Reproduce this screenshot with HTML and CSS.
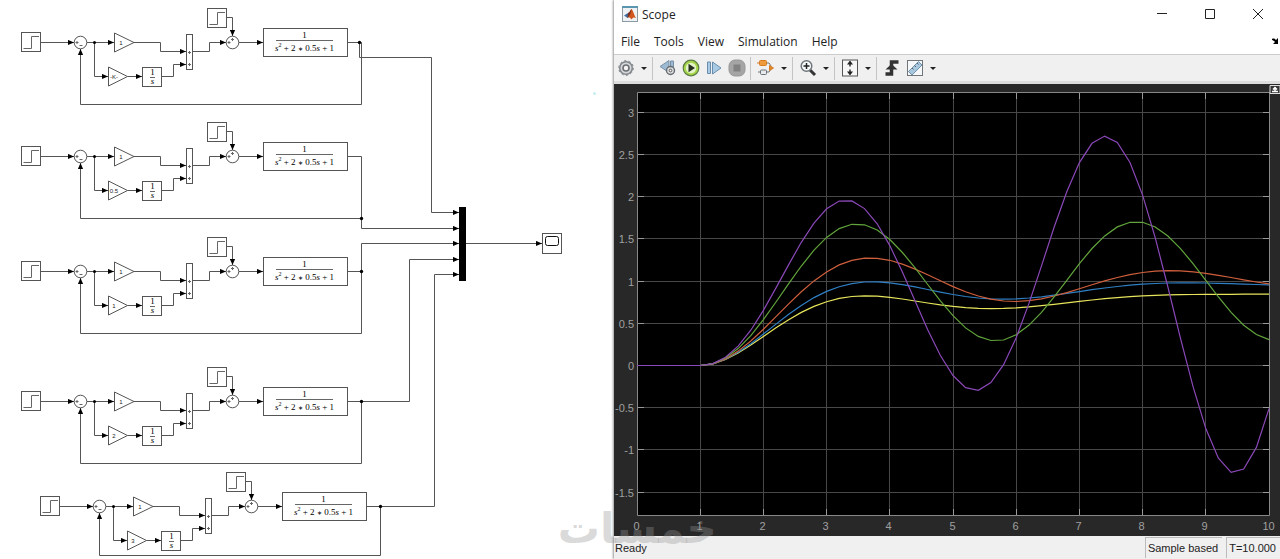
FILE: index.html
```html
<!DOCTYPE html>
<html lang="en">
<head>
<meta charset="utf-8">
<meta name="viewport" content="width=device-width, initial-scale=1">
<title>Scope</title>
<link rel="stylesheet" href="styles.css">
</head>
<body>
<main class="desktop">
  <section class="model" aria-label="Block diagram">
    <svg class="diagram" viewBox="0 0 614 559" preserveAspectRatio="xMinYMin meet">
      <defs>
        <marker id="arrow" markerUnits="userSpaceOnUse" markerWidth="7" markerHeight="6" refX="6" refY="3" orient="auto">
          <path d="M0 0.4 6 3 0 5.6z" fill="#000"/>
        </marker>
        <g id="step">
          <rect class="block" x="0.5" y="0.5" width="19" height="19"/>
          <path class="trace" d="M2.5 16.5h8v-12h7.5"/>
        </g>
        <g id="loop">
          <use href="#step" x="21" y="32"/>
          <use href="#step" x="207" y="8"/>
          <circle class="block" cx="80.5" cy="42.5" r="6.3"/>
          <circle class="block" cx="232.5" cy="42.5" r="6.3"/>
          <path class="sign" d="M75.5 42.5h3M77 41v3M79.5 45.5h3M227.5 42.5h3M229 41v3M231 39.5h3M232.5 38v3"/>
          <path class="block" d="M114.5 33v19l19.5-9.5zM108.5 67v19l19-9.5z"/>
          <rect class="block" x="142.5" y="67.5" width="19" height="19"/>
          <path class="sign" d="M150 77.5h5"/>
          <text class="math small" x="152.5" y="75">1</text>
          <text class="math small slanted" x="152.5" y="84">s</text>
          <rect class="block" x="186.5" y="34.5" width="6" height="35"/>
          <path class="sign" d="M188 52.5h3M189.5 51v3M188 64.5h3M189.5 63v3"/>
          <text class="gain" x="121" y="45">1</text>
          <path class="wire arrow" d="M40.5 42.5H74"/>
          <path class="wire arrow" d="M87 42.5H114"/>
          <path class="wire arrow" d="M94.5 42.5V76.5H108"/>
          <path class="wire arrow" d="M134 42.5H160.5V51.5H186"/>
          <path class="wire arrow" d="M127.5 76.5H142"/>
          <path class="wire arrow" d="M161.5 76.5H173.5V64.5H186"/>
          <path class="wire arrow" d="M192.5 51.5H209.5V42.5H226"/>
          <path class="wire arrow" d="M226.5 17.5H232.5V36"/>
          <path class="wire arrow" d="M239 42.5H263"/>
          <circle cx="94.5" cy="42.5" r="1.5"/>
          <rect class="block" x="263.5" y="28.5" width="84" height="28"/>
          <path class="sign" d="M276 40.5H333"/>
          <text class="math" x="304.5" y="38">1</text>
          <text class="math" x="304.5" y="51"><tspan class="slanted">s</tspan><tspan class="power" dy="-4">2</tspan><tspan dy="4"> + 2 </tspan><tspan class="times">∗</tspan> 0.5<tspan class="slanted">s</tspan> + 1</text>
        </g>
      </defs>

      <use href="#loop"/>
      <use href="#loop" y="114"/>
      <use href="#loop" y="229"/>
      <use href="#loop" y="359"/>
      <use href="#loop" x="19" y="464"/>

      <text class="gain" x="114" y="79">-K-</text>
      <text class="gain" x="114" y="193">0.5</text>
      <text class="gain" x="114" y="308">1</text>
      <text class="gain" x="114" y="438">2</text>
      <text class="gain" x="133" y="543">3</text>

      <path class="wire arrow" d="M347.5 42.5H361.5V104.5H80.5V49"/>
      <path class="wire arrow" d="M359.5 42.5V57.5H431.5V212.5H459"/>
      <path class="wire arrow" d="M347.5 156.5H361.5V228.5H459"/>
      <path class="wire arrow" d="M361.5 218.5H80.5V163"/>
      <path class="wire arrow" d="M347.5 271.5H361.5V243.5H459"/>
      <path class="wire arrow" d="M361.5 271.5V333.5H80.5V278"/>
      <path class="wire arrow" d="M347.5 401.5H409.5V259.5H459"/>
      <path class="wire arrow" d="M361.5 401.5V463.5H80.5V408"/>
      <path class="wire arrow" d="M366.5 506.5H434.5V274.5H459"/>
      <path class="wire arrow" d="M380.5 506.5V555.5H99.5V513"/>
      <circle cx="359.5" cy="42.5" r="1.7"/>
      <circle cx="361.5" cy="218.5" r="1.7"/>
      <circle cx="361.5" cy="271.5" r="1.7"/>
      <circle cx="361.5" cy="401.5" r="1.7"/>
      <circle cx="380.5" cy="506.5" r="1.7"/>

      <rect x="459" y="207" width="7" height="74"/>
      <path class="wire arrow" d="M466 243.5H542"/>
      <rect class="block" x="542.5" y="233.5" width="19" height="20"/>
      <rect class="screen" x="545.5" y="236.5" width="13" height="9" rx="2"/>
      <circle cx="594.5" cy="93.5" r="1.5" fill="#c5eef0"/>
    </svg>
  </section>

  <section class="scope" aria-label="Scope">
    <header class="titlebar">
      <svg class="app-icon" viewBox="0 0 16 16">
        <rect x="0.5" y="0.5" width="15" height="15" fill="#eef2f4" stroke="#8b9aa3"/>
        <path d="M0 1h16" stroke="#5a97ae" stroke-width="2"/>
        <path d="M2 9.5 6 7l2 2-2.5 3z" fill="#3f6c9c"/>
        <path d="M5.5 12C7.5 10 8 4 9.5 3c1.5 1 2.5 6 4.5 9-2-1-3-1-4.5 1.5C8 11.5 7 11 5.5 12z" fill="#d2571f"/>
        <path d="M6 7c1.5-.5 2.5-3 3.5-4-.5 3-1.5 7-4 9z" fill="#7d2f1c"/>
      </svg>
      <h1 class="title">Scope</h1>
      <div class="window-buttons">
        <button class="win" aria-label="Minimize"><svg viewBox="0 0 12 12"><path d="M1 5.5h10"/></svg></button>
        <button class="win" aria-label="Maximize"><svg viewBox="0 0 12 12"><path d="M1.5 1.5h9v9h-9z"/></svg></button>
        <button class="win" aria-label="Close"><svg viewBox="0 0 12 12"><path d="M1 1l10 10M11 1 1 11"/></svg></button>
      </div>
    </header>
    <nav class="menu">
      <button>File</button><button>Tools</button><button>View</button><button>Simulation</button><button>Help</button>
      <button class="dock" aria-label="Dock"><svg viewBox="0 0 8 8"><path d="M0 2c2-1 3 0 4 1l2-2v6H1l2-2C2 4 1 3 0 3z"/></svg></button>
    </nav>
    <div class="toolbar">
      <div class="group first">
        <button class="tool" aria-label="Configuration"><svg viewBox="0 0 18 18"><circle cx="9" cy="9" r="6.3" fill="#d5d7d9" stroke="#80858a" stroke-width="1.5"/><circle cx="9" cy="9" r="7.3" fill="none" stroke="#80858a" stroke-width="1" stroke-dasharray="2.3 2.3"/><circle cx="9" cy="9" r="3" fill="#f4f4f4" stroke="#6c7074" stroke-width="1.6"/></svg></button>
        <button class="caret" aria-label="More configuration"></button>
      </div>
      <div class="group">
        <button class="tool" aria-label="Step back"><svg viewBox="0 0 18 18"><path d="M10 1.5v12L1 7.5zM11.5 2h3v9h-3z" fill="#9dbad2" stroke="#7791a8"/><circle cx="11.5" cy="11.5" r="4" fill="#dadcde" stroke="#666b70" stroke-width="1.4"/><circle cx="11.5" cy="11.5" r="1.3" fill="#fff" stroke="#555"/></svg></button>
        <button class="tool" aria-label="Run"><svg viewBox="0 0 18 18"><circle cx="9" cy="9" r="7.8" fill="#a6d64a" stroke="#5b7c43" stroke-width="1.2"/><circle cx="9" cy="9" r="5.2" fill="#e6f4cb"/><path d="M6.5 4.8v8.4L13 9z" fill="#26301f"/></svg></button>
        <button class="tool" aria-label="Step forward"><svg viewBox="0 0 18 18"><path d="M2.5 3h3v11.5h-3zM7.5 3v12L16 9z" fill="#a9cae4" stroke="#6a8dac"/></svg></button>
        <button class="tool" aria-label="Stop"><svg viewBox="0 0 18 18"><rect x="1" y="1" width="16" height="16" rx="6" fill="#a5a5a5" stroke="#979797"/><rect x="5.5" y="5.5" width="7" height="7" fill="#828282"/></svg></button>
      </div>
      <div class="group">
        <button class="tool" aria-label="Highlight block"><svg viewBox="0 0 18 18"><path d="M9 4h3l2 3M1 13h3M9 13h3l2-3" fill="none" stroke="#777"/><rect x="2.5" y="1.5" width="7" height="5" rx="1" fill="#f09a3e" stroke="#d57b20"/><path d="M0 4h3M12.5 6.5v5l4-2.5z" fill="#e8862b" stroke="#d57b20"/><rect x="3.5" y="11" width="6" height="4.5" rx="1" fill="#e8eaec" stroke="#687179"/></svg></button>
        <button class="caret" aria-label="More highlight"></button>
      </div>
      <div class="group">
        <button class="tool" aria-label="Zoom"><svg viewBox="0 0 18 18"><path d="m11 11 5 5" stroke="#333" stroke-width="3"/><circle cx="7.5" cy="7" r="5.3" fill="#f7fafb" stroke="#70767b" stroke-width="1.5"/><path d="M4.5 7h6M7.5 4v6" stroke="#222" stroke-width="1.5"/></svg></button>
        <button class="caret" aria-label="More zoom"></button>
      </div>
      <div class="group">
        <button class="tool" aria-label="Scale axes"><svg viewBox="0 0 18 18"><rect x="1.5" y="1" width="15" height="16" fill="#f7f7f7" stroke="#555"/><path d="M9 1.5 6 5.5h2.3v2h1.4v-2H12zM9 16.5l-3-4h2.3v-2h1.4v2H12z" fill="#222"/></svg></button>
        <button class="caret" aria-label="More scaling"></button>
      </div>
      <div class="group last">
        <button class="tool" aria-label="Triggers"><svg viewBox="0 0 18 18"><path d="M15.500 3H8.500v12H2.500" fill="none" stroke="#333" stroke-width="3.5"/><path d="M2.500 10.500 8.500 5l6 5.500z" fill="#333"/></svg></button>
        <button class="tool" aria-label="Measurements"><svg viewBox="0 0 18 18"><rect x="1.5" y="1.5" width="15" height="15" fill="#f5f7f8" stroke="#70757a"/><path d="M2.5 12.5 12.5 2.5l3.5 3.5-10 10z" fill="#a7c8df" stroke="#6f90a8"/><path d="m6 9 1.5 1.5M8.5 6.5 10 8M11 4l1.5 1.5" stroke="#567"/></svg></button>
        <button class="caret" aria-label="More measurements"></button>
      </div>
    </div>
    <div class="figure">
      <svg class="plot" viewBox="0 0 666 452" role="img" aria-label="Step responses over time">
        <rect x="23" y="9" width="632" height="422" fill="#000"/>
        <g id="grid"></g>
        <path class="frame" d="M23.5 8.5H655.5V431.5H23.5z"/>
        <g id="curves"></g>
        <g id="labels"></g>
        <path d="M656 1.5h10v8h-10z" fill="#333" stroke="#ddd"/>
        <path d="M658 7.5h6M661 3v4M659 5.5l2-2 2 2" fill="none" stroke="#fff" stroke-width="1.5"/>
      </svg>
    </div>
    <footer class="status">
      <span class="ready">Ready</span>
      <span class="cell">Sample based</span>
      <span class="cell">T=10.000</span>
    </footer>
  </section>
  <div class="watermark" lang="ar" dir="rtl">خمسات</div>
</main>
<script src="plot.js"></script>
</body>
</html>
```

FILE: styles.css
```css
* { box-sizing: border-box; }

body {
  margin: 0;
  background: #fff;
  color: #222;
  font-family: "Open Sans", "Noto Sans", sans-serif;
  font-size: 12px;
}

button {
  margin: 0;
  padding: 0;
  border: 0;
  background: none;
  color: inherit;
  font: inherit;
}

.desktop {
  position: relative;
  display: grid;
  grid-template-columns: 614fr 666fr;
  min-height: 100vh;
  overflow: hidden;
}

.diagram, .plot { display: block; width: 100%; }

.block { fill: #fff; stroke: #555; }
.trace, .sign { fill: none; stroke: #666; stroke-width: 1; }
.wire { fill: none; stroke: #555; }
.arrow { marker-end: url(#arrow); }
.screen { fill: #fff; stroke: #111; }
.gain { font: 6px "Liberation Sans", sans-serif; text-anchor: middle; fill: #222; }
.math { font: 9px "Liberation Serif", serif; text-anchor: middle; fill: #000; }
.slanted { font-style: italic; }
.power, .times { font-size: 6px; }

.scope {
  display: flex;
  flex-direction: column;
  min-width: 0;
  box-shadow: -1px 0 2px #999;
}

.titlebar {
  display: flex;
  align-items: center;
  gap: 4px;
  height: 28px;
  padding-left: 8px;
}
.app-icon { width: 16px; height: 16px; }
.title { margin: 0; font-size: 12px; font-weight: 400; }
.window-buttons { display: flex; gap: 36px; margin-left: auto; padding-right: 16px; }
.win { width: 12px; height: 12px; }
.win svg { display: block; fill: none; stroke: #222; }

.menu {
  display: flex;
  align-items: center;
  gap: 14px;
  height: 26px;
  padding-left: 7px;
}
.menu .dock { width: 8px; height: 8px; margin-left: auto; }
.dock svg { display: block; }

.toolbar {
  display: flex;
  align-items: center;
  height: 30px;
  border-top: 1px solid #ccc;
  border-bottom: 3px solid #ddd;
  background: #f0f0f0;
}
.group {
  display: flex;
  align-items: center;
  gap: 5px;
  height: 23px;
  padding: 0 4px 0 6px;
  border-right: 1px solid #c4c4c4;
}
.group.first { padding-left: 3px; }
.group.last { border-right: 0; }
.tool { width: 18px; height: 18px; }
.tool svg { display: block; }
.caret { display: grid; place-items: center; width: 8px; height: 18px; }
.caret::before {
  content: "";
  border: 3px solid transparent;
  border-top-color: #222;
  border-bottom: 0;
}

.figure { flex: 1; background: #282828; }
.grid-line { stroke: #484848; }
.tick { stroke: #999; }
.frame { fill: none; stroke: #888; }
.axis-label { font: 11px "Liberation Sans", sans-serif; fill: #a0a0a0; }
.axis-label.x { text-anchor: middle; }
.axis-label.y { text-anchor: end; }
.curve { fill: none; stroke-width: 1.2px; }

.status {
  display: flex;
  align-items: center;
  gap: 4px;
  height: 23px;
  background: #f0f0f0;
  font: 11px "Liberation Sans", sans-serif;
}
.ready { margin-right: auto; padding-left: 1px; }
.cell {
  padding: 4px 4px 4px 2px;
  border-top: 1px solid #bbb;
  border-left: 1px solid #bbb;
}

.watermark {
  position: absolute;
  right: 44%;
  bottom: 5px;
  color: rgba(150, 150, 150, 0.35);
  font: 700 42px/50px "DejaVu Sans", sans-serif;
  pointer-events: none;
}
```

FILE: plot.js
```js
// Responses of a PI loop around 1 / (s^2 + s + 1), unit step applied at t = 1.
const NS = "http://www.w3.org/2000/svg";
const px = t => 23 + t * 63.2;
const py = v => 281.5 - v * 84.4;

function add(parent, name, attrs, text) {
  const el = document.createElementNS(NS, name);
  for (const key in attrs) el.setAttribute(key, attrs[key]);
  if (text !== undefined) el.textContent = text;
  document.getElementById(parent).appendChild(el);
}

function line(cls, x1, y1, x2, y2) {
  add("grid", "line", { class: cls, x1, y1, x2, y2 });
}

for (let t = 0; t <= 10; t++) {
  const x = Math.round(px(t) - 0.5) + 0.5;
  if (t > 0 && t < 10) {
    line("grid-line", x, 9, x, 431);
    line("tick", x, 9, x, 15);
    line("tick", x, 425, x, 431);
  }
  add("labels", "text", { class: "axis-label x", x: x - 1, y: 446 }, t);
}

for (let v = -1.5; v <= 3; v += 0.5) {
  const y = Math.round(py(v) - 0.5) + 0.5;
  line("grid-line", 24, y, 655, y);
  line("tick", 24, y, 30, y);
  line("tick", 649, y, 655, y);
  add("labels", "text", { class: "axis-label y", x: 20, y: y + 4 }, v);
}

function response(ki) {
  const h = 0.002;
  const points = [[0, 0], [1, 0]];
  let y = 0, v = 0, q = 0;
  for (let n = 1; n <= 4500; n++) {
    const e = 1 - y;
    q += e * h;
    v += (e + ki * q - v - y) * h;
    y += v * h;
    if (n % 100 === 0) points.push([1 + n * h, y]);
  }
  return points.map(([t, value]) => px(t).toFixed(1) + "," + py(value).toFixed(1)).join(" ");
}

[[0.25, "#e6e45a"], [0.5, "#2f7fc4"], [1, "#cf5f3c"], [2, "#62a53c"], [3, "#8a48b8"]]
  .forEach(([ki, stroke]) => add("curves", "polyline", { class: "curve", stroke, points: response(ki) }));
```
